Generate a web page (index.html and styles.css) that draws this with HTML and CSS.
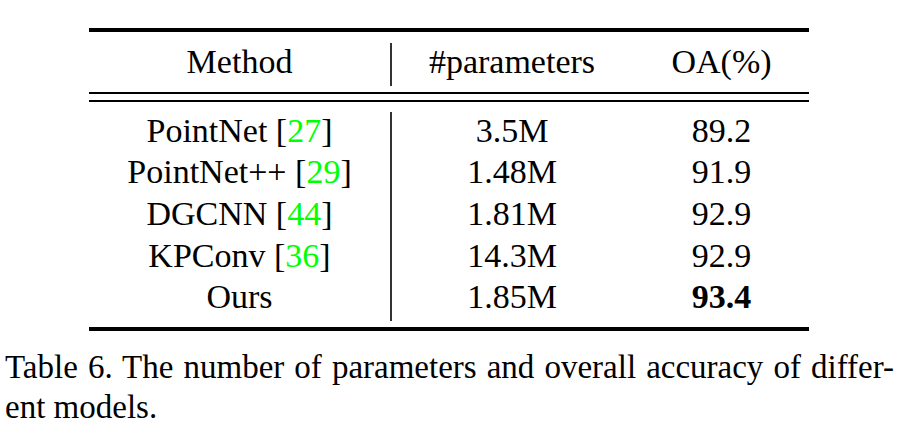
FILE: index.html
```html
<!DOCTYPE html>
<html lang="en">
<head>
    <meta charset="UTF-8">
    <title>Table 6</title>
    <link rel="stylesheet" href="styles.css">
</head>
<body>
    <div class="page">
        <div class="table">
            <div class="rule-thick"></div>

            <div class="row head">
                <div class="cell"><div class="txt">Method</div></div>
                <div class="cell sep"><div class="txt">#parameters</div></div>
                <div class="cell"><div class="txt">OA(%)</div></div>
            </div>

            <div class="rule-double"></div>

            <div class="row body">
                <div class="cell">
                    <div class="txt">
                        <div>PointNet [<span class="cite">27</span>]</div>
                        <div>PointNet++ [<span class="cite">29</span>]</div>
                        <div>DGCNN [<span class="cite">44</span>]</div>
                        <div>KPConv [<span class="cite">36</span>]</div>
                        <div>Ours</div>
                    </div>
                </div>
                <div class="cell sep">
                    <div class="txt">
                        <div>3.5M</div>
                        <div>1.48M</div>
                        <div>1.81M</div>
                        <div>14.3M</div>
                        <div>1.85M</div>
                    </div>
                </div>
                <div class="cell">
                    <div class="txt">
                        <div>89.2</div>
                        <div>91.9</div>
                        <div>92.9</div>
                        <div>92.9</div>
                        <div><b>93.4</b></div>
                    </div>
                </div>
            </div>

            <div class="rule-thick"></div>
        </div>

        <p class="caption">
            <span class="line-full">Table 6. The number of parameters and overall accuracy of differ-</span>
            <span class="line">ent models.</span>
        </p>
    </div>
</body>
</html>
```

FILE: styles.css
```css
* {
    margin: 0;
    padding: 0;
    box-sizing: border-box;
}

body {
    background: #fff;
    color: #000;
    font-family: 'Liberation Serif', 'Times New Roman', serif;
    font-size: 34px;
}

.page {
    padding-top: 28px;
}

.table {
    width: 720px;
    margin-left: 89px;
}

.rule-thick {
    height: 4px;
    background: #000;
}

.rule-double {
    height: 10px;
    border-top: 2px solid #000;
    border-bottom: 2px solid #000;
}

.row {
    display: grid;
    grid-template-columns: 301px 244px 175px;
    text-align: center;
    line-height: 41.7px;
}

.head {
    padding: 11px 0 6px;
}

.head .cell {
    height: 43px;
}

.body {
    padding: 10px 0 6px;
}

.cell.sep {
    border-left: 2px solid #333;
    padding-right: 2px;
}

.txt {
    margin: -2.5px 0 2.5px;
}

.cite {
    color: #00ff00;
}

b {
    font-weight: bold;
}

.caption {
    margin: 16px 0 0 5px;
    width: 889px;
    font-size: 33px;
    line-height: 40px;
}

.caption span {
    display: block;
    white-space: nowrap;
}

.line-full {
    text-align: justify;
    text-align-last: justify;
}
```
